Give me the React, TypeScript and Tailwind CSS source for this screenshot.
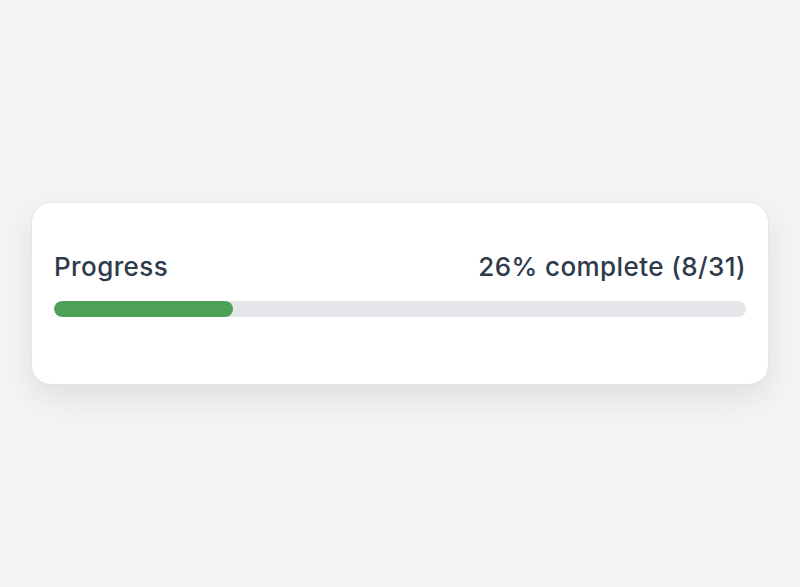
import React from 'react';

const completed = 8;
const total = 31;

export default function App() {
    const percent = Math.round((completed / total) * 100);

    return (
        <div className="min-h-screen bg-[#f3f4f6] flex items-center justify-center px-[31px]" style={{ fontFamily: 'Inter, "Noto Sans", sans-serif' }}>
            <div className="w-full bg-white rounded-[20px] border border-[#e2e4e8] shadow-[0_12px_32px_rgba(0,0,0,0.09)] px-[22px] pt-[49px] pb-[67px]">
                <div className="flex items-center justify-between mb-[19px]">
                    <span className="text-[26px] leading-[30px] font-medium tracking-[0.4px] text-[#2f3a4b]">Progress</span>
                    <span className="text-[26px] leading-[30px] font-medium tracking-[0.4px] text-[#2f3a4b]">
                        {percent}% complete ({completed}/{total})
                    </span>
                </div>
                <div className="h-[16px] w-full rounded-full bg-[#e5e7eb] overflow-hidden">
                    <div className="h-full rounded-full bg-[#4ca157]" style={{ width: `${(completed / total) * 100}%` }} />
                </div>
            </div>
        </div>
    );
}
